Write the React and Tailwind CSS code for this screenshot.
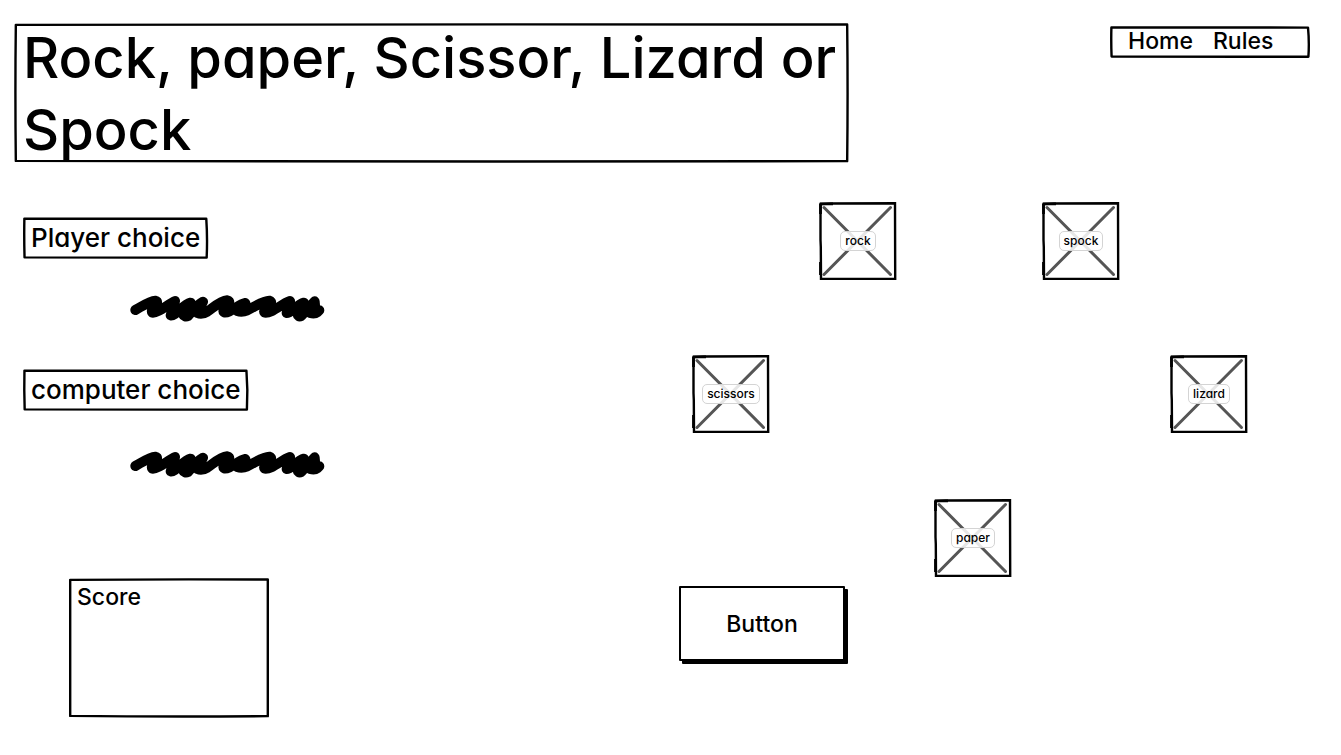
const FRAMES = {
  wide: "M0.1 0.6 Q50 0 99.9 0.4 Q100 50 99.9 99.4 Q50 100 0.1 99.2 Q0 50 0.1 0.6 Z",
  label: "M0.2 1.5 Q50 1 99.5 2 Q100.2 50 99.7 99 Q50 99.5 0.3 98.5 Q0 50 0.2 1.5 Z",
};

function Frame({ shape = "wide" }) {
  return (
    <svg
      aria-hidden="true"
      viewBox="0 0 100 100"
      preserveAspectRatio="none"
      className="pointer-events-none absolute inset-0 h-full w-full overflow-visible"
    >
      <path
        d={FRAMES[shape]}
        fill="none"
        stroke="#000"
        strokeWidth="2.4"
        strokeLinejoin="round"
        vectorEffect="non-scaling-stroke"
      />
    </svg>
  );
}

function Scribble() {
  return (
    <svg aria-hidden="true" viewBox="30 25 585 84" className="h-7 w-[195px]">
      <path
        d="M46 73 C66 62 88 46 106 45 C124 48 88 70 97 81 C112 84 146 54 165 46 L152 89 C166 92 188 58 212 51 L188 85 Q194 96 204 91 C216 80 226 60 249 48 L232 82 Q246 88 262 78 C280 66 300 46 322 44 C342 48 302 70 312 80 C330 84 354 56 376 52 L352 76 Q366 81 382 74 C406 62 426 46 448 45 C468 50 424 70 434 81 C456 84 482 56 510 46 L500 82 C512 84 532 56 552 51 L532 84 Q534 96 544 91 L584 47 L586 70 L570 82 Q584 86 592 80 L598 74"
        fill="none"
        stroke="#000"
        strokeWidth="30"
        strokeLinecap="round"
        strokeLinejoin="round"
      />
      <path d="M150 72 L250 70 M505 72 L588 70" stroke="#000" strokeWidth="32" />
    </svg>
  );
}

function Choice({ name }) {
  return (
    <button
      type="button"
      className="relative flex size-[78px] shrink-0 items-center justify-center text-xs leading-4 font-medium"
    >
      <svg aria-hidden="true" viewBox="0 0 78 78" className="absolute inset-0 size-full">
        <path d="M5 5.5 L71.5 72.5 M71.5 5.5 L5 72.5" stroke="#555" strokeWidth="3" strokeLinecap="round" />
        <path d="M1.5 2 L12 1.5 L76 1.3 L76.2 77 L2 77 L1.8 45 L1.5 38 Z" fill="none" stroke="#000" strokeWidth="2.4" />
        <path d="M1 1.8 H14 M1.5 2 V12 M1.5 60 V73" stroke="#000" strokeWidth="2.8" />
      </svg>
      <span className="relative rounded-[5px] border border-[#d4d4d4] bg-white/85 px-1 py-px">{name}</span>
    </button>
  );
}

function PlayerLabel({ children }) {
  return (
    <h2 className="relative w-fit px-[7px] py-1 text-[26px] leading-8 font-medium whitespace-nowrap">
      <Frame shape="label" />
      {children}
    </h2>
  );
}

export default function App() {
  return (
    <div className="bg-white pt-6 pr-8 pb-9 pl-[15px] font-['Inter','Liberation_Sans',sans-serif] text-black [font-feature-settings:'cv11']">
      <header className="flex items-start justify-between">
        <h1 className="relative flex w-[833px] px-2 text-[56px] leading-[72px] font-medium">
          <span className="-mt-0.5 -mb-1">Rock, paper, Scissor, Lizard or Spock</span>
          <Frame />
        </h1>
        <nav className="relative mt-[3px] flex w-[198px] gap-5 px-[17px] pb-0.5 text-[23px] leading-7 font-medium">
          <Frame shape="label" />
          <a href="#home">Home</a>
          <a href="#rules">Rules</a>
        </nav>
      </header>

      <main className="mt-10 flex">
        <section className="flex w-[664px] shrink-0 flex-col pt-4 pl-[9px]">
          <PlayerLabel>Player choice</PlayerLabel>
          <div className="mt-9 pl-[106px]">
            <Scribble />
          </div>
          <div className="mt-12">
            <PlayerLabel>computer choice</PlayerLabel>
          </div>
          <div className="mt-10 pl-[106px]">
            <Scribble />
          </div>
          <div className="relative mt-[101px] ml-[46px] h-[138px] w-[198px] px-[7px] py-1 text-[23px] leading-7 font-medium">
            <Frame />
            Score
          </div>
        </section>

        <section className="flex flex-1 flex-col">
          <div className="flex gap-[145px] pl-[140px]">
            <Choice name="rock" />
            <Choice name="spock" />
          </div>
          <div className="mt-[75px] flex justify-between pr-[61px] pl-[13px]">
            <Choice name="scissors" />
            <Choice name="lizard" />
          </div>
          <div className="mt-[66px] flex items-start gap-[89px]">
            <button
              type="button"
              className="mt-[87px] h-[75px] w-[166px] rounded-[1px] border-2 border-black bg-white text-[23px] leading-7 font-medium shadow-[3px_3px_0_#000]"
            >
              Button
            </button>
            <Choice name="paper" />
          </div>
        </section>
      </main>
    </div>
  );
}
